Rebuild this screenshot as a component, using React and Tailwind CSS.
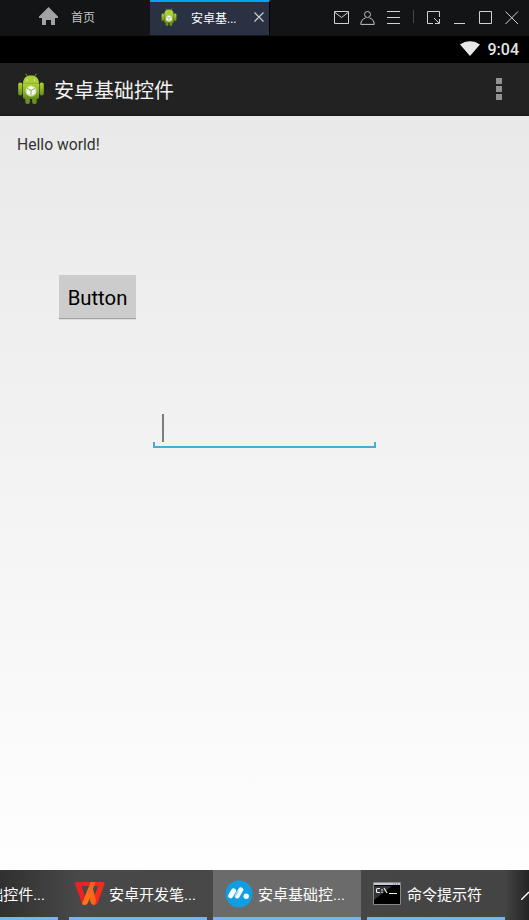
import React from 'react';

const AndroidIcon = ({ className }) => (
  <svg className={className} viewBox="0 0 26 31" fill="none">
    <defs>
      <linearGradient id="robot" x1="0" y1="0" x2="0" y2="1">
        <stop offset="0%" stopColor="#b3d335" />
        <stop offset="60%" stopColor="#86ad24" />
        <stop offset="100%" stopColor="#638a17" />
      </linearGradient>
    </defs>
    <path d="M8 1l2 3.200M18 1l-2 3.200" stroke="#7c9d2c" strokeWidth="1" strokeLinecap="round" />
    <path d="M5 10.300C5.300 4.500 8.500 2.500 13 2.500s7.700 2 8 7.800z" fill="#a9ce35" />
    <rect x="0.200" y="9.500" width="4.200" height="13" rx="2" fill="url(#robot)" />
    <rect x="21.600" y="9.500" width="4.200" height="13" rx="2" fill="url(#robot)" />
    <rect x="7.300" y="22" width="4.600" height="9" rx="2" fill="#6c9019" />
    <rect x="14.100" y="22" width="4.600" height="9" rx="2" fill="#6c9019" />
    <path d="M5 10.300h16V24a2 2 0 0 1-2 2H7a2 2 0 0 1-2-2z" fill="url(#robot)" />
    <circle cx="9.300" cy="7" r="0.700" fill="#e9f4c4" />
    <circle cx="16.700" cy="7" r="0.700" fill="#e9f4c4" />
    <circle cx="13" cy="18" r="5.600" fill="#c3d890" />
    <path d="M13 13l4.300 2.200v5.300L13 22.800l-4.300-2.300v-5.300z" fill="#f7faef" />
    <path d="M9 15.400l4 2 4-2M13 17.400v5" stroke="#8aa75a" strokeWidth="1" />
  </svg>
);

const TitleBar = () => (
  <div className="flex h-9 shrink-0 bg-[#131416] text-[12px] leading-none">
    <div className="flex w-[150px] items-center pb-[2px] pl-[39px]">
      <svg className="mt-[-2px] h-[18px] w-[19px]" viewBox="0 0 19 18" fill="#a2a2a2">
        <path d="M9.500 0L19 9.500V11h-3v7h-4v-5H7v5H3v-7H0V9.500z" />
      </svg>
      <span className="ml-[13px] pt-[2px] text-[#c4c4c4]">首页</span>
    </div>
    <div className="flex h-[35px] w-[120px] items-center border-t-2 border-r border-t-[#00a5f4] border-r-black bg-[#2a3142] pl-[10px]">
      <AndroidIcon className="mb-[3px] h-[18px] w-[18px]" />
      <span className="ml-[13px] w-[52px] text-white">安卓基...</span>
      <svg className="mb-[3px] ml-[11px] h-[10px] w-[10px]" viewBox="0 0 10 10" stroke="#d0d3d8" strokeWidth="1.100">
        <path d="M0.500 0.500l9 9M9.500 0.500l-9 9" />
      </svg>
    </div>
    <div className="flex h-[35px] items-center pl-[64px]">
      <svg className="h-[13px] w-[15px]" viewBox="0 0 15 13" fill="none" stroke="#d2d2d2">
        <path d="M0.500 0.500h14v12H0.500zM1 1.500l6.500 5 6.500-5" />
      </svg>
      <svg className="ml-[11px] h-[14px] w-[15px]" viewBox="0 0 15 14" fill="none" stroke="#c4c4c4">
        <circle cx="7.500" cy="3.500" r="3" />
        <path d="M5.500 7C2.500 7.800 0.800 10 0.800 13.400h13.400C14.200 10 12.500 7.800 9.500 7" />
      </svg>
      <svg className="ml-[12px] h-[14px] w-[13px]" viewBox="0 0 13 14" stroke="#d2d2d2">
        <path d="M0 0.500h13M0 6.500h13M0 12.500h13" />
      </svg>
      <div className="mb-[2px] ml-[13px] h-[13px] w-px bg-[#45464a]" />
      <svg className="ml-[13px] h-[14px] w-[14px]" viewBox="0 0 14 14" fill="none" stroke="#d2d2d2">
        <path d="M6 12.500H0.500V0.500h12V6M7 7l5 5M12.500 8v4.500H8" />
      </svg>
      <svg className="ml-[13px] h-[14px] w-[12px]" viewBox="0 0 12 14" stroke="#d2d2d2">
        <path d="M0 12.500h11" />
      </svg>
      <svg className="ml-[13px] h-[14px] w-[14px]" viewBox="0 0 14 14" fill="none" stroke="#d2d2d2">
        <path d="M0.500 0.500h12v12h-12z" />
      </svg>
      <svg className="ml-[12px] h-[14px] w-[14px]" viewBox="0 0 14 14" stroke="#d2d2d2">
        <path d="M0.500 0.500l12.500 12.500M13 0.500L0.500 13" />
      </svg>
    </div>
  </div>
);

const StatusBar = () => (
  <div className="flex h-[27px] shrink-0 items-center justify-end bg-black pr-[10px]">
    <svg className="mb-[2px] h-[15px] w-5" viewBox="0 0 20 15" fill="#e8e8e8">
      <path d="M0 3.500C5.800-1 14.200-1 20 3.500L10 15z" />
    </svg>
    <span className="ml-2 pt-px text-[16px] leading-none font-medium text-[#e4e4e4]">9:04</span>
  </div>
);

const ActionBar = () => (
  <div className="flex h-[53px] shrink-0 items-center border-b-2 border-[#1b1b1b] bg-[#222222] pr-[27px] pl-[18px]">
    <AndroidIcon className="mb-px h-[31px] w-[26px]" />
    <h1 className="ml-[10px] pt-[4px] text-[20px] leading-none text-[#f2f2f2]">安卓基础控件</h1>
    <div className="ml-auto flex flex-col gap-[2px]">
      <div className="size-[6px] bg-[#929292]" />
      <div className="size-[6px] bg-[#929292]" />
      <div className="size-[6px] bg-[#929292]" />
    </div>
  </div>
);

const Screen = () => (
  <div className="flex h-[754px] shrink-0 flex-col items-start bg-linear-to-b from-[#e9e9e9] to-[#fefefe]">
    <p className="mt-[19px] ml-[17px] text-[15.700px] leading-5 text-[#333333]">Hello world!</p>
    <button className="mt-[120px] ml-[59px] h-[44px] w-[77px] border-b border-[#a3a3a3] bg-[#cccccc] pt-[3px] text-[20.300px] leading-none text-black shadow-[0_1px_0_#dddddd]">
      Button
    </button>
    <div className="mt-[95px] ml-[153px] flex w-[223px] flex-col">
      <div className="ml-[9px] h-[28px] w-[2px] bg-[#7d7d7d]" />
      <div className="h-[6px] border-x-2 border-b-2 border-[#42b0d6]" />
    </div>
  </div>
);

const WpsIcon = () => (
  <svg className="h-[23px] w-[30px]" viewBox="0 0 30 23">
    <defs>
      <linearGradient id="wps" x1="0" y1="0" x2="0" y2="1">
        <stop offset="0%" stopColor="#fb5a22" />
        <stop offset="100%" stopColor="#ff7a12" />
      </linearGradient>
    </defs>
    <path d="M1 0h14.500l-1.800 4H6.500l4.500 14-2.500 4.500Q7 22 6.500 20L0 1.500Q0 0 1 0z" fill="#f0201f" />
    <path d="M19 0h10q1 0.500 0.700 1.500L23 20q-1 3-4 3l-1.500-4.500L23.300 4H18.500z" fill="#f62a1f" />
    <path d="M14.500 8.500l3 -3L21 18q-0.500 4.500-2 5-2.500 0-3.500-3L13.500 13z" fill="#ff6518" />
    <path d="M15.500 0H20.500L13 20.500Q12 23 9.500 23 7.800 23 7.200 21.500z" fill="url(#wps)" />
  </svg>
);

const MumuIcon = () => (
  <svg className="h-[28px] w-[28px]" viewBox="0 0 28 28">
    <circle cx="14" cy="14" r="13.500" fill="#0f9ee2" />
    <path d="M5.700 15.800L8.600 10.800M12.200 16L15.800 9.800" stroke="#f4fafd" strokeWidth="5" strokeLinecap="round" />
    <circle cx="21.200" cy="16.200" r="2.700" fill="#f4fafd" />
    <path d="M10 16.800l3.500-6" stroke="#0f9ee2" strokeWidth="0.500" />
  </svg>
);

const CmdIcon = () => (
  <svg className="h-[23px] w-[28px]" viewBox="0 0 28 23">
    <path d="M0.500 0.500h27v22h-27z" fill="#000000" stroke="#86888c" />
    <path d="M1 1h26v2H1z" fill="#c3cbd6" />
    <path d="M20 2h6" stroke="#5d7391" strokeDasharray="1 1" />
    <path d="M1 4h18L1 18z" fill="#343434" />
    <path d="M7 6.500H4.500q-1 0-1 1v2q0 1 1 1H7M9 7v1.500M9 9.500V11M11 6l3 5M16 11.500h8" stroke="#eeeeee" strokeWidth="1.200" fill="none" />
  </svg>
);

const TaskItem = ({ icon, label, className }) => (
  <div className={`flex h-[50px] shrink-0 items-center overflow-hidden border-b-3 border-[#78b4ec] text-[15px] leading-none whitespace-nowrap text-white ${className}`}>
    {icon}
    <span className="pt-[4px]">{label}</span>
  </div>
);

const TaskBar = () => (
  <div className="flex h-[50px] shrink-0 overflow-hidden bg-linear-to-r from-[#303030] via-[#494949] via-15% to-[#444444]">
    <TaskItem className="w-[58px] justify-end pr-[13px]" label="基础控件..." />
    <TaskItem className="ml-[11px] w-[138px] gap-1 pl-[6px]" icon={<WpsIcon />} label="安卓开发笔..." />
    <TaskItem className="ml-[6px] w-[148px] gap-[5px] bg-[#6b6b6b] pl-[12px]" icon={<MumuIcon />} label="安卓基础控..." />
    <TaskItem className="ml-[6px] w-[138px] gap-[6px] pl-[6px]" icon={<CmdIcon />} label="命令提示符" />
    <div className="flex w-[24px] items-center justify-end bg-linear-to-r from-[#444444] to-[#242424]">
      <svg className="h-[9px] w-[8px]" viewBox="0 0 8 9" stroke="#ffffff" strokeWidth="1.400">
        <path d="M0 9l8-8" />
      </svg>
    </div>
  </div>
);

const App = () => (
  <div className="flex h-[920px] w-[529px] flex-col overflow-hidden font-[Roboto,'Noto_Sans_CJK_SC',sans-serif]">
    <TitleBar />
    <StatusBar />
    <ActionBar />
    <Screen />
    <TaskBar />
  </div>
);

export default App;
